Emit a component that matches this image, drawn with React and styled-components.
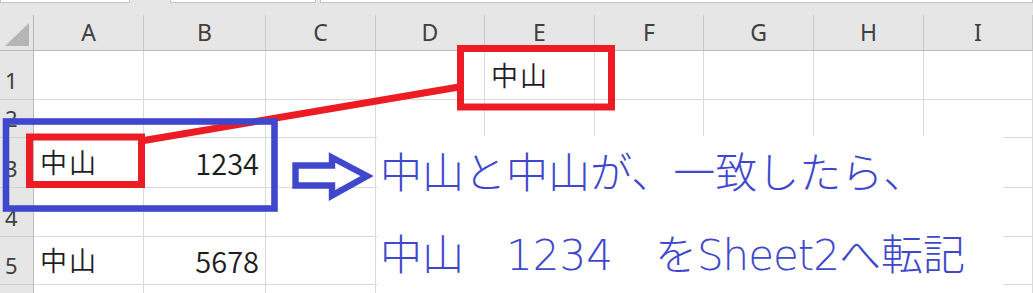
import React from "react";
import styled, { createGlobalStyle } from "styled-components";

const GlobalStyle = createGlobalStyle`
  html, body { margin: 0; padding: 0; background: #fff; }
  body { font-family: "Noto Sans", "Noto Sans CJK JP", sans-serif; }
`;

const COLS = [
  { key: "A", width: 110 },
  { key: "B", width: 122 },
  { key: "C", width: 110 },
  { key: "D", width: 109 },
  { key: "E", width: 110 },
  { key: "F", width: 109 },
  { key: "G", width: 110 },
  { key: "H", width: 110 },
  { key: "I", width: 109 },
];

// row 6 is only a sliver at the bottom, its number is not visible
const ROWS = [
  { n: 1, h: "49px", label: true },
  { n: 2, h: "38px", label: true },
  { n: 3, h: "50px", label: true },
  { n: 4, h: "49px", label: true },
  { n: 5, h: "48px", label: true },
  { n: 6, h: "1fr", label: false },
];

const DATA = {
  E1: "中山",
  A3: "中山",
  B3: 1234,
  A5: "中山",
  B5: 5678,
};

const RED = "#ed1c24";
const BLUE = "#3f48cc";

const Page = styled.div`
  position: relative;
  width: 1033px;
  height: 293px;
  overflow: hidden;
  display: flex;
  flex-direction: column;
  background: #fff;
`;

const TopStrip = styled.div`
  height: 15px;
  flex: none;
  background: #e6e6e6;
  display: flex;
  align-items: flex-start;
`;

const BarEdge = styled.div`
  height: 3px;
  box-sizing: border-box;
  background: #fff;
  border: 1px solid #c4c4c4;
  border-top: none;
  width: ${(p) => (p.$w ? `${p.$w}px` : "auto")};
  flex: ${(p) => (p.$w ? "none" : "1")};
  margin-left: ${(p) => p.$gap || 0}px;
`;

const Sheet = styled.div`
  flex: 1;
  display: grid;
  grid-template-columns: 34px ${COLS.map((c) => `${c.width}px`).join(" ")} 1fr;
  grid-template-rows: 36px ${ROWS.map((r) => r.h).join(" ")};
`;

const Corner = styled.div`
  background: #e6e6e6;
  border-right: 1px solid #b9b9b9;
  border-bottom: 1px solid #b9b9b9;
  display: flex;
  justify-content: flex-end;
  align-items: flex-end;
  padding: 0 4px 4px 0;
  box-sizing: border-box;
`;

const Triangle = styled.div`
  width: 24px;
  height: 23px;
  background: #b5b5b5;
  clip-path: polygon(100% 0, 100% 100%, 0 100%);
`;

const ColHead = styled.div`
  background: #e6e6e6;
  border-right: 1px solid #c8c8c8;
  border-bottom: 1px solid #b9b9b9;
  box-sizing: border-box;
  display: flex;
  align-items: center;
  justify-content: center;
  font-family: "Noto Sans", sans-serif;
  font-size: 23px;
  color: #404040;
  padding-bottom: 2px;
`;

const RowHead = styled.div`
  background: #e6e6e6;
  border-right: 1px solid #b9b9b9;
  border-bottom: 1px solid #d0d0d0;
  box-sizing: border-box;
  display: flex;
  align-items: flex-end;
  padding: 0 0 8px 5px;
  font-family: "Noto Sans", sans-serif;
  font-size: 22px;
  line-height: 22px;
  color: #404040;
  overflow: hidden;
`;

const Cell = styled.div`
  border-right: 1px solid #dadada;
  border-bottom: 1px solid #dadada;
  box-sizing: border-box;
  display: flex;
  align-items: center;
  justify-content: ${(p) => (p.$num ? "flex-end" : "flex-start")};
  padding: 0 6px 2px 6px;
  font-family: "Noto Sans CJK JP", sans-serif;
  font-size: ${(p) => (p.$num ? "29px" : "27px")};
  font-weight: 350;
  letter-spacing: ${(p) => (p.$num ? "0" : "2px")};
  color: #1e1e1e;
  white-space: nowrap;
  overflow: hidden;
`;

const Note = styled.div`
  position: absolute;
  left: 377px;
  top: 136px;
  width: 626px;
  height: 157px;
  background: #fff;
  display: flex;
  flex-direction: column;
  gap: 12px;
  padding: 3px 0 0 3px;
  box-sizing: border-box;
  font-family: "DejaVu Sans", "Noto Sans CJK JP", sans-serif;
  font-size: 42px;
  font-weight: 300;
  color: ${BLUE};
`;

const NoteLine = styled.div`
  line-height: 70px;
  white-space: pre;
`;

const Latin = styled.span`
  letter-spacing: -1px;
`;

const Marks = styled.svg`
  position: absolute;
  left: 0;
  top: 0;
  pointer-events: none;
`;

function Annotations() {
  return (
    <Marks width="1033" height="293" viewBox="0 0 1033 293">
      <line x1="141" y1="141" x2="459" y2="87" stroke={RED} strokeWidth="7" />
      <rect x="6" y="121.5" width="268.5" height="87" fill="none" stroke={BLUE} strokeWidth="6.6" />
      <rect x="460.5" y="48.5" width="151" height="58.5" fill="none" stroke={RED} strokeWidth="7" />
      <rect x="29.5" y="137" width="112" height="47.5" fill="none" stroke={RED} strokeWidth="7" />
      <polygon
        points="295.5,165.5 332,165.5 332,157.5 367,176 332,195.5 332,185.5 295.5,185.5"
        fill="none"
        stroke={BLUE}
        strokeWidth="6.4"
        strokeLinejoin="miter"
      />
    </Marks>
  );
}

export default function App() {
  return (
    <Page>
      <GlobalStyle />
      <TopStrip>
        <BarEdge $w={130} />
        <BarEdge $w={146} $gap={40} />
        <BarEdge $gap={4} />
      </TopStrip>
      <Sheet>
        <Corner>
          <Triangle />
        </Corner>
        {COLS.map((c) => (
          <ColHead key={c.key}>{c.key}</ColHead>
        ))}
        <ColHead />
        {ROWS.map((r) => (
          <React.Fragment key={r.n}>
            <RowHead>{r.label ? r.n : null}</RowHead>
            {COLS.map((c) => {
              const v = DATA[`${c.key}${r.n}`];
              return (
                <Cell key={c.key} $num={typeof v === "number"}>
                  {v}
                </Cell>
              );
            })}
            <Cell />
          </React.Fragment>
        ))}
      </Sheet>
      <Note>
        <NoteLine>中山と中山が、一致したら、</NoteLine>
        <NoteLine>
          中山　1234　を<Latin>Sheet2</Latin>へ転記
        </NoteLine>
      </Note>
      <Annotations />
    </Page>
  );
}
